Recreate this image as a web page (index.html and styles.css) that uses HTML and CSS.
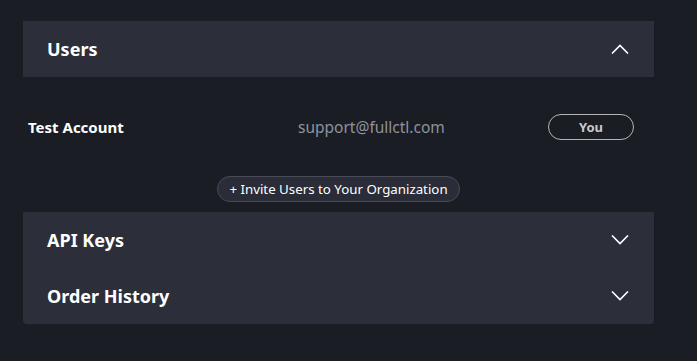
FILE: index.html
```html
<!DOCTYPE html>
<html lang="en">
<head>
    <meta charset="UTF-8">
    <meta name="viewport" content="width=device-width, initial-scale=1.0">
    <title>Organization</title>
    <link rel="stylesheet" href="styles.css">
</head>
<body>
    <div class="container">
        <div class="panel panel-top">
            <div class="panel-header">
                <h3>Users</h3>
                <svg class="chevron" width="18" height="10" viewBox="0 0 18 10"><path d="M1 9.5 L9 1.5 L17 9.5" /></svg>
            </div>
        </div>

        <div class="user-row">
            <span class="user-name">Test Account</span>
            <span class="user-email">support@fullctl.com</span>
            <span class="badge">You</span>
        </div>

        <div class="invite">
            <button class="invite-btn">+ Invite Users to Your Organization</button>
        </div>

        <div class="panel panel-bottom">
            <div class="panel-header">
                <h3>API Keys</h3>
                <svg class="chevron" width="18" height="10" viewBox="0 0 18 10"><path d="M1 0.5 L9 8.5 L17 0.5" /></svg>
            </div>
            <div class="panel-header">
                <h3>Order History</h3>
                <svg class="chevron" width="18" height="10" viewBox="0 0 18 10"><path d="M1 0.5 L9 8.5 L17 0.5" /></svg>
            </div>
        </div>
    </div>
</body>
</html>
```

FILE: styles.css
```css
body {
    font-family: "Noto Sans", Arial, sans-serif;
    margin: 0;
    padding: 0;
    background-color: #1b1d24;
    color: #ffffff;
}
.container {
    width: 631px;
    padding: 21px 0 0 23px;
}
.panel {
    background: #2c2e3a;
}
.panel-bottom {
    border-radius: 0 0 4px 4px;
}
.panel-header {
    height: 56px;
    display: flex;
    align-items: center;
    justify-content: space-between;
    padding: 0 25px 0 24px;
}
.panel-header h3 {
    margin: 0;
    font-size: 18px;
    font-weight: bold;
}
.chevron {
    display: block;
}
.chevron path {
    fill: none;
    stroke: #ffffff;
    stroke-width: 1.6;
}
.user-row {
    display: grid;
    grid-template-columns: 270px 1fr auto;
    align-items: center;
    height: 26px;
    margin-top: 37px;
    padding: 0 20px 0 5px;
}
.user-name {
    font-size: 15px;
    font-weight: bold;
}
.user-email {
    font-size: 15.5px;
    color: #8e929c;
}
.badge {
    width: 84px;
    height: 24px;
    border: 1px solid #b4b4b8;
    border-radius: 13px;
    display: flex;
    align-items: center;
    justify-content: center;
    font-size: 13px;
    font-weight: bold;
    color: #c9c9cc;
}
.invite {
    display: flex;
    justify-content: center;
    margin-top: 36px;
    margin-bottom: 10px;
}
.invite-btn {
    height: 26px;
    width: 243px;
    padding: 0;
    background: #2a2c37;
    border: 1px solid #484a56;
    border-radius: 13px;
    color: #ffffff;
    font-family: inherit;
    font-size: 13.3px;
}
```
